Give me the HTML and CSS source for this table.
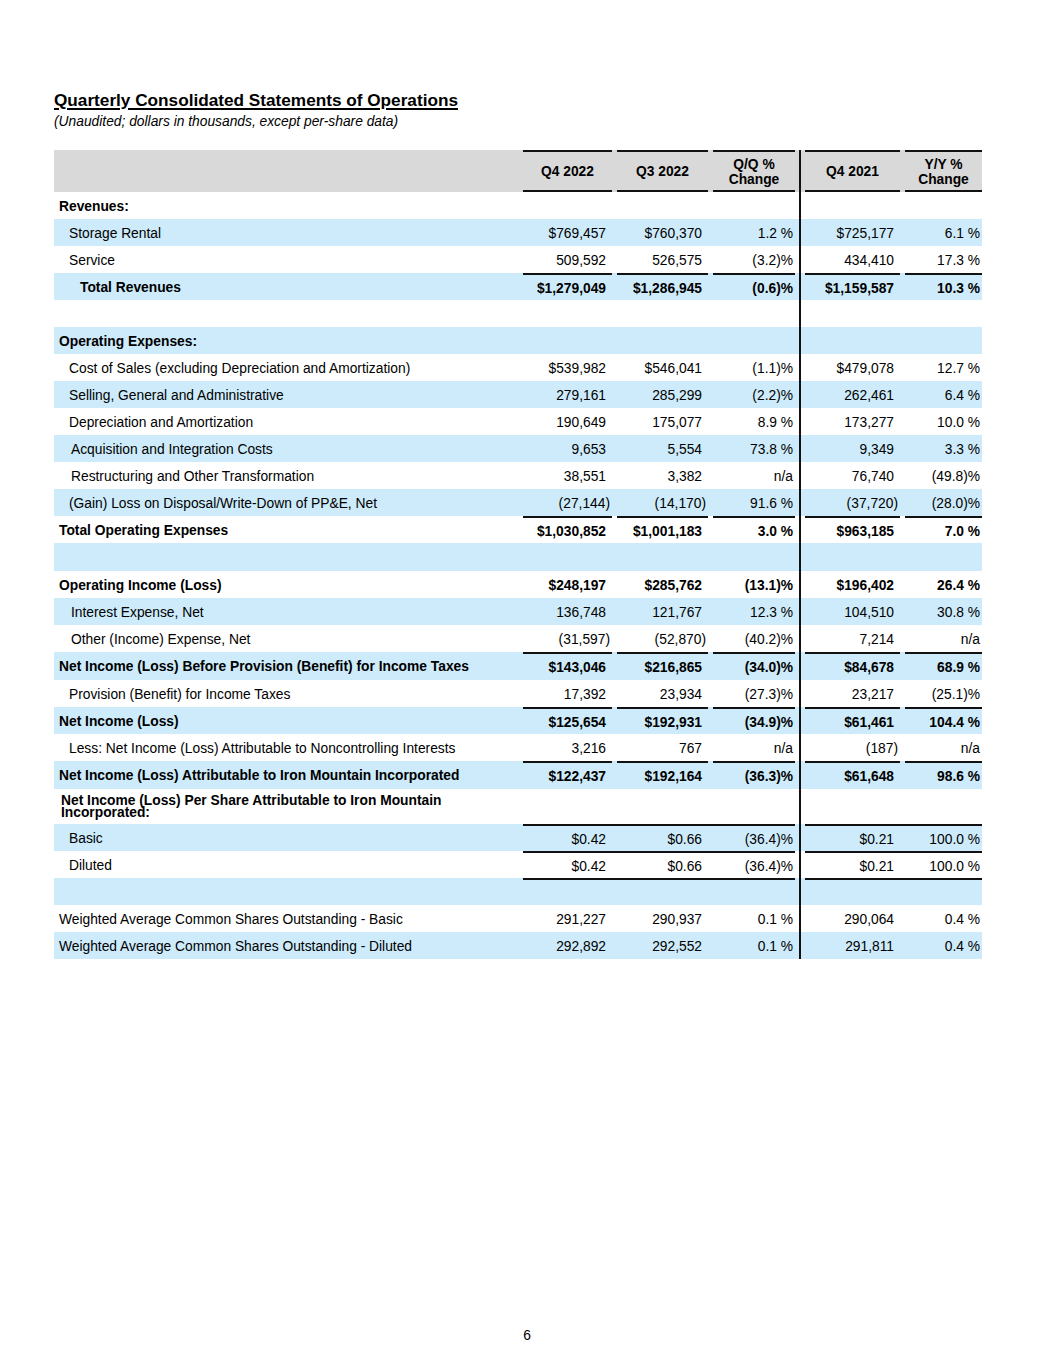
FILE: index.html
```html
<!DOCTYPE html>
<html>
<head>
<meta charset="utf-8">
<link rel="stylesheet" href="styles.css">
</head>
<body>
<div class="page">
  <h1 class="title">Quarterly Consolidated Statements of Operations</h1>
  <p class="sub">(Unaudited; dollars in thousands, except per-share data)</p>

  <div class="tbl">
    <div class="row hd">
      <div class="lb"></div>
      <div class="c c1">Q4 2022</div>
      <div class="c c2">Q3 2022</div>
      <div class="c c3">Q/Q %<br>Change</div>
      <div class="dv"></div>
      <div class="c c4">Q4 2021</div>
      <div class="c c5">Y/Y %<br>Change</div>
    </div>

    <div class="row bold">
      <div class="lb i0">Revenues:</div>
      <div class="c c1"></div><div class="c c2"></div><div class="c c3"></div><div class="dv"></div><div class="c c4"></div><div class="c c5"></div>
    </div>
    <div class="row blue">
      <div class="lb i1">Storage Rental</div>
      <div class="c c1">$769,457</div><div class="c c2">$760,370</div><div class="c c3">1.2 %</div><div class="dv"></div><div class="c c4">$725,177</div><div class="c c5">6.1 %</div>
    </div>
    <div class="row">
      <div class="lb i1">Service</div>
      <div class="c c1">509,592</div><div class="c c2">526,575</div><div class="c c3">(3.2)%</div><div class="dv"></div><div class="c c4">434,410</div><div class="c c5">17.3 %</div>
    </div>
    <div class="row blue bold tl">
      <div class="lb i2">Total Revenues</div>
      <div class="c c1">$1,279,049</div><div class="c c2">$1,286,945</div><div class="c c3">(0.6)%</div><div class="dv"></div><div class="c c4">$1,159,587</div><div class="c c5">10.3 %</div>
    </div>
    <div class="row">
      <div class="lb"></div>
      <div class="c c1"></div><div class="c c2"></div><div class="c c3"></div><div class="dv"></div><div class="c c4"></div><div class="c c5"></div>
    </div>
    <div class="row blue bold">
      <div class="lb i0">Operating Expenses:</div>
      <div class="c c1"></div><div class="c c2"></div><div class="c c3"></div><div class="dv"></div><div class="c c4"></div><div class="c c5"></div>
    </div>
    <div class="row">
      <div class="lb i1">Cost of Sales (excluding Depreciation and Amortization)</div>
      <div class="c c1">$539,982</div><div class="c c2">$546,041</div><div class="c c3">(1.1)%</div><div class="dv"></div><div class="c c4">$479,078</div><div class="c c5">12.7 %</div>
    </div>
    <div class="row blue">
      <div class="lb i1">Selling, General and Administrative</div>
      <div class="c c1">279,161</div><div class="c c2">285,299</div><div class="c c3">(2.2)%</div><div class="dv"></div><div class="c c4">262,461</div><div class="c c5">6.4 %</div>
    </div>
    <div class="row">
      <div class="lb i1">Depreciation and Amortization</div>
      <div class="c c1">190,649</div><div class="c c2">175,077</div><div class="c c3">8.9 %</div><div class="dv"></div><div class="c c4">173,277</div><div class="c c5">10.0 %</div>
    </div>
    <div class="row blue">
      <div class="lb i1b">Acquisition and Integration Costs</div>
      <div class="c c1">9,653</div><div class="c c2">5,554</div><div class="c c3">73.8 %</div><div class="dv"></div><div class="c c4">9,349</div><div class="c c5">3.3 %</div>
    </div>
    <div class="row">
      <div class="lb i1b">Restructuring and Other Transformation</div>
      <div class="c c1">38,551</div><div class="c c2">3,382</div><div class="c c3">n/a</div><div class="dv"></div><div class="c c4">76,740</div><div class="c c5">(49.8)%</div>
    </div>
    <div class="row blue">
      <div class="lb i1">(Gain) Loss on Disposal/Write-Down of PP&amp;E, Net</div>
      <div class="c c1 ng">(27,144)</div><div class="c c2 ng">(14,170)</div><div class="c c3">91.6 %</div><div class="dv"></div><div class="c c4 ng">(37,720)</div><div class="c c5">(28.0)%</div>
    </div>
    <div class="row bold tl">
      <div class="lb i0">Total Operating Expenses</div>
      <div class="c c1">$1,030,852</div><div class="c c2">$1,001,183</div><div class="c c3">3.0 %</div><div class="dv"></div><div class="c c4">$963,185</div><div class="c c5">7.0 %</div>
    </div>
    <div class="row blue tall1">
      <div class="lb"></div>
      <div class="c c1"></div><div class="c c2"></div><div class="c c3"></div><div class="dv"></div><div class="c c4"></div><div class="c c5"></div>
    </div>
    <div class="row bold">
      <div class="lb i0">Operating Income (Loss)</div>
      <div class="c c1">$248,197</div><div class="c c2">$285,762</div><div class="c c3">(13.1)%</div><div class="dv"></div><div class="c c4">$196,402</div><div class="c c5">26.4 %</div>
    </div>
    <div class="row blue">
      <div class="lb i1b">Interest Expense, Net</div>
      <div class="c c1">136,748</div><div class="c c2">121,767</div><div class="c c3">12.3 %</div><div class="dv"></div><div class="c c4">104,510</div><div class="c c5">30.8 %</div>
    </div>
    <div class="row">
      <div class="lb i1b">Other (Income) Expense, Net</div>
      <div class="c c1 ng">(31,597)</div><div class="c c2 ng">(52,870)</div><div class="c c3">(40.2)%</div><div class="dv"></div><div class="c c4">7,214</div><div class="c c5">n/a</div>
    </div>
    <div class="row blue bold tl tall1">
      <div class="lb i0">Net Income (Loss) Before Provision (Benefit) for Income Taxes</div>
      <div class="c c1">$143,046</div><div class="c c2">$216,865</div><div class="c c3">(34.0)%</div><div class="dv"></div><div class="c c4">$84,678</div><div class="c c5">68.9 %</div>
    </div>
    <div class="row">
      <div class="lb i1">Provision (Benefit) for Income Taxes</div>
      <div class="c c1">17,392</div><div class="c c2">23,934</div><div class="c c3">(27.3)%</div><div class="dv"></div><div class="c c4">23,217</div><div class="c c5">(25.1)%</div>
    </div>
    <div class="row blue bold tl">
      <div class="lb i0">Net Income (Loss)</div>
      <div class="c c1">$125,654</div><div class="c c2">$192,931</div><div class="c c3">(34.9)%</div><div class="dv"></div><div class="c c4">$61,461</div><div class="c c5">104.4 %</div>
    </div>
    <div class="row">
      <div class="lb i1">Less: Net Income (Loss) Attributable to Noncontrolling Interests</div>
      <div class="c c1">3,216</div><div class="c c2">767</div><div class="c c3">n/a</div><div class="dv"></div><div class="c c4 ng">(187)</div><div class="c c5">n/a</div>
    </div>
    <div class="row blue bold tl tall1">
      <div class="lb i0">Net Income (Loss) Attributable to Iron Mountain Incorporated</div>
      <div class="c c1">$122,437</div><div class="c c2">$192,164</div><div class="c c3">(36.3)%</div><div class="dv"></div><div class="c c4">$61,648</div><div class="c c5">98.6 %</div>
    </div>
    <div class="row bold tall2">
      <div class="lb i0b">Net Income (Loss) Per Share Attributable to Iron Mountain Incorporated:</div>
      <div class="c c1"></div><div class="c c2"></div><div class="c c3"></div><div class="dv"></div><div class="c c4"></div><div class="c c5"></div>
    </div>
    <div class="row blue tlc">
      <div class="lb i1">Basic</div>
      <div class="c c1">$0.42</div><div class="c c2">$0.66</div><div class="c c3">(36.4)%</div><div class="dv"></div><div class="c c4">$0.21</div><div class="c c5">100.0 %</div>
    </div>
    <div class="row tlc">
      <div class="lb i1">Diluted</div>
      <div class="c c1">$0.42</div><div class="c c2">$0.66</div><div class="c c3">(36.4)%</div><div class="dv"></div><div class="c c4">$0.21</div><div class="c c5">100.0 %</div>
    </div>
    <div class="row blue tlc">
      <div class="lb"></div>
      <div class="c c1"></div><div class="c c2"></div><div class="c c3"></div><div class="dv"></div><div class="c c4"></div><div class="c c5"></div>
    </div>
    <div class="row">
      <div class="lb i0">Weighted Average Common Shares Outstanding - Basic</div>
      <div class="c c1">291,227</div><div class="c c2">290,937</div><div class="c c3">0.1 %</div><div class="dv"></div><div class="c c4">290,064</div><div class="c c5">0.4 %</div>
    </div>
    <div class="row blue">
      <div class="lb i0">Weighted Average Common Shares Outstanding - Diluted</div>
      <div class="c c1">292,892</div><div class="c c2">292,552</div><div class="c c3">0.1 %</div><div class="dv"></div><div class="c c4">291,811</div><div class="c c5">0.4 %</div>
    </div>
  </div>

  <div class="foot">6</div>
</div>
</body>
</html>
```

FILE: styles.css
```css
html, body {
  margin: 0;
  padding: 0;
  background: #fff;
}
body {
  font-family: "Liberation Sans", Arial, sans-serif;
  color: #000;
}
.page {
  box-sizing: border-box;
  min-height: 1365px;
  padding: 90px 0 21px 54px;
  display: flex;
  flex-direction: column;
}
.title {
  margin: 0;
  font-size: 17.2px;
  line-height: 20px;
  font-weight: bold;
  text-decoration: underline;
  text-decoration-thickness: 1.5px;
  text-underline-offset: 2px;
}
.sub {
  margin: 3px 0 0 0;
  font-size: 13.8px;
  line-height: 17px;
  font-style: italic;
}
.tbl {
  margin-top: 20px;
  width: 928px;
  font-size: 13.8px;
}
.row {
  display: grid;
  grid-template-columns: 469px 89px 96px 87px 10px 95px 82px;
  height: 27px;
}
.row.tall1 { height: 28px; }
.row.tall2 { height: 35px; }
.row.blue { background: #cdebfa; }
.row.bold { font-weight: bold; }
.row.hd {
  height: 42px;
  background: #d9d9d9;
  font-weight: bold;
}
.lb {
  box-sizing: border-box;
  display: flex;
  align-items: center;
  padding-right: 5px;
  padding-top: 2px;
  line-height: 14px;
}
.tall2 .lb { line-height: 12.5px; padding-top: 1px; }
.i0 { padding-left: 5px; }
.i0b { padding-left: 7px; }
.i1 { padding-left: 15px; }
.i1b { padding-left: 17px; }
.i2 { padding-left: 26px; }
.c {
  box-sizing: border-box;
  display: flex;
  align-items: center;
  justify-content: flex-end;
  white-space: nowrap;
  padding-right: 6px;
  padding-top: 2px;
}
.tl .c, .tlc .c { padding-top: 1px; }
.c.ng { padding-right: 2px; }
.c3, .c5 { padding-right: 2px; }
.c2, .c3, .c5 { margin-left: 5px; }
.hd .c {
  justify-content: center;
  text-align: center;
  padding-right: 0;
  padding-top: 1px;
  line-height: 15px;
  border-top: 2px solid #111;
  border-bottom: 2px solid #111;
}
.tl .c, .tlc .c { border-top: 2px solid #111; }
.tlc .c2, .tlc .c3, .tlc .c5 { margin-left: 0; }
.dv {
  background: linear-gradient(#111, #111) no-repeat center / 2px 100%;
}
.foot {
  margin-top: auto;
  width: 946px;
  text-align: center;
  font-size: 13.8px;
  line-height: 16px;
}
```
